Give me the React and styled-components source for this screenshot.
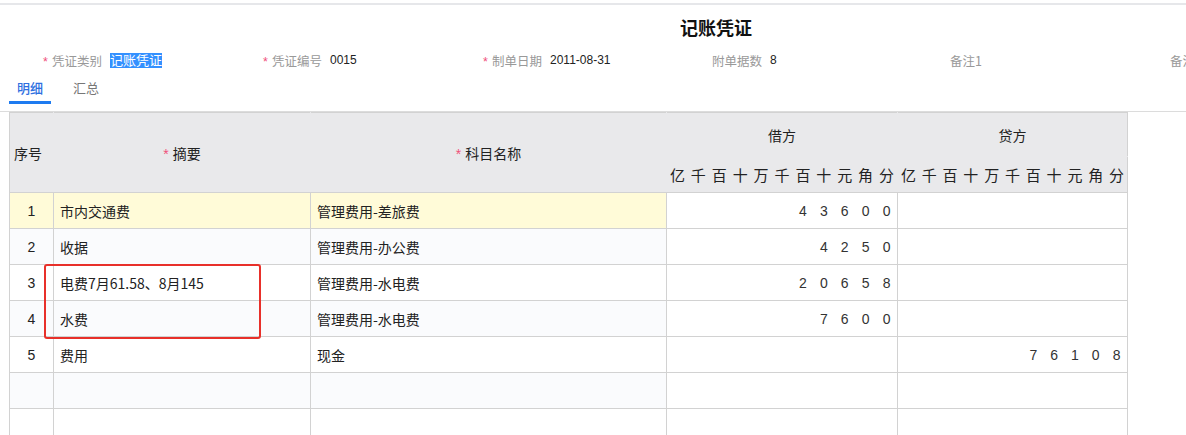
import styled, { createGlobalStyle } from "styled-components";

const GlobalStyle = createGlobalStyle`
  html, body {
    margin: 0;
    padding: 0;
    background: #ffffff;
    font-family: "Liberation Sans", "Noto Sans CJK SC", sans-serif;
    color: #333;
    overflow: hidden;
  }
`;

const UNITS = ["亿", "千", "百", "十", "万", "千", "百", "十", "元", "角", "分"];

const campos = [
  { label: "凭证类别", required: true, value: "记账凭证", selected: true },
  { label: "凭证编号", required: true, value: "0015" },
  { label: "制单日期", required: true, value: "2011-08-31" },
  { label: "附单据数", value: "8" },
  { label: "备注1", value: "" },
  { label: "备注2", value: "" },
];

const linhas = [
  { n: 1, resumo: "市内交通费", conta: "管理费用-差旅费", debito: "43600", ativo: true },
  { n: 2, resumo: "收据", conta: "管理费用-办公费", debito: "4250" },
  { n: 3, resumo: "电费7月61.58、8月145", conta: "管理费用-水电费", debito: "20658" },
  { n: 4, resumo: "水费", conta: "管理费用-水电费", debito: "7600" },
  { n: 5, resumo: "费用", conta: "现金", credito: "76108" },
  { n: "" },
  { n: "" },
];

function Digitos({ valor }) {
  const casas = Array(11).fill("");
  if (valor) {
    const s = valor.split("");
    s.forEach((d, i) => {
      casas[11 - s.length + i] = d;
    });
  }
  return (
    <DigitGrid>
      {casas.map((d, i) => (
        <Digit key={i}>{d}</Digit>
      ))}
    </DigitGrid>
  );
}

function Unidades() {
  return (
    <DigitGrid>
      {UNITS.map((u, i) => (
        <Unit key={i}>{u}</Unit>
      ))}
    </DigitGrid>
  );
}

function App() {
  return (
    <Page>
      <GlobalStyle />
      <TopLine />
      <Titulo>记账凭证</Titulo>

      <FormRow>
        {campos.map((c) => (
          <Field key={c.label}>
            <Label>
              {c.required && <Star>*</Star>}
              {c.label}
            </Label>
            <Value $selected={c.selected}>{c.value}</Value>
          </Field>
        ))}
      </FormRow>

      <Tabs>
        <Tab $active>明细</Tab>
        <Tab>汇总</Tab>
      </Tabs>

      <TableWrap>
        <Tabela>
          <colgroup>
            <col style={{ width: 44 }} />
            <col style={{ width: 257 }} />
            <col style={{ width: 356 }} />
            <col style={{ width: 231 }} />
            <col style={{ width: 230 }} />
          </colgroup>
          <thead>
            <tr>
              <HeadCell rowSpan={2} $first $bottom>
                序号
              </HeadCell>
              <HeadCell rowSpan={2} $bottom>
                <Star>*</Star>摘要
              </HeadCell>
              <HeadCell rowSpan={2} $bottom>
                <Star>*</Star>科目名称
              </HeadCell>
              <HeadCell $h={44}>借方</HeadCell>
              <HeadCell $h={44} $last>
                贷方
              </HeadCell>
            </tr>
            <tr>
              <UnitCell>
                <Unidades />
              </UnitCell>
              <UnitCell $last>
                <Unidades />
              </UnitCell>
            </tr>
          </thead>
          <tbody>
            {linhas.map((l, i) => (
              <Row key={i} $ativo={l.ativo} $par={i % 2 === 1}>
                <NumCell>{l.n}</NumCell>
                <TextCell>{l.resumo}</TextCell>
                <TextCell>{l.conta}</TextCell>
                <AmountCell>
                  <Digitos valor={l.debito} />
                </AmountCell>
                <AmountCell>
                  <Digitos valor={l.credito} />
                </AmountCell>
              </Row>
            ))}
          </tbody>
        </Tabela>
        <Destaque />
      </TableWrap>
    </Page>
  );
}

const Page = styled.div`
  width: 1186px;
  height: 435px;
  overflow: hidden;
`;

const TopLine = styled.div`
  height: 3px;
  border-bottom: 2px solid #e6e7ea;
`;

const Titulo = styled.div`
  padding: 9px 0 0 246px;
  height: 26px;
  line-height: 26px;
  text-align: center;
  font-family: "Noto Sans CJK SC", sans-serif;
  font-size: 18px;
  font-weight: 700;
  color: #111;
`;

const FormRow = styled.div`
  display: flex;
  align-items: center;
  height: 40px;
  padding-left: 40px;
  white-space: nowrap;
`;

const Field = styled.div`
  flex: 0 0 220px;
  display: flex;
  align-items: center;
  gap: 8px;
`;

const Label = styled.span`
  width: 62px;
  text-align: right;
  font-family: "Noto Sans CJK SC", sans-serif;
  font-size: 12.5px;
  color: #999;
`;

const Star = styled.span`
  color: #f0507a;
  margin-right: 4px;
  font-family: "Liberation Sans", sans-serif;
`;

const Value = styled.span`
  font-family: "Liberation Sans", "Noto Sans CJK SC", sans-serif;
  line-height: 15px;
  color: ${(p) => (p.$selected ? "#ffffff" : "#222")};
  background: ${(p) => (p.$selected ? "#3390ff" : "transparent")};
  font-size: ${(p) => (p.$selected ? "13px" : "12px")};
`;

const Tabs = styled.div`
  display: flex;
  gap: 14px;
  height: 31px;
  padding-left: 9px;
  border-bottom: 1px solid #dcdcdc;
`;

const Tab = styled.div`
  height: 21px;
  padding: 0 8px;
  line-height: 16px;
  font-family: "Noto Sans CJK SC", sans-serif;
  font-size: 13px;
  font-weight: ${(p) => (p.$active ? 500 : 400)};
  color: ${(p) => (p.$active ? "#2f6fdf" : "#777")};
  border-bottom: 3px solid ${(p) => (p.$active ? "#1e7bf0" : "transparent")};
  box-sizing: content-box;
`;

const TableWrap = styled.div`
  position: relative;
  margin-left: 9px;
  width: 1119px;
`;

const Tabela = styled.table`
  width: 1119px;
  table-layout: fixed;
  border-collapse: collapse;
  font-family: "Noto Sans CJK SC", sans-serif;
  font-size: 14px;
  color: #222;

  td,
  th {
    padding: 0;
    box-sizing: border-box;
  }

  td {
    border: 1px solid #d2d2d2;
  }
`;

const headBg = "#e9e9eb";
const line = "#d2d2d2";

const HeadCell = styled.th`
  background: ${headBg};
  font-weight: 400;
  height: ${(p) => (p.$h ? `${p.$h}px` : "auto")};
  text-align: ${(p) => (p.$first ? "left" : "center")};
  padding-left: ${(p) => (p.$first ? "4px" : "0")} !important;
  vertical-align: middle;
  border-top: 1px solid ${line};
  border-left: 1px solid ${(p) => (p.$first ? line : headBg)};
  border-right: 1px solid ${(p) => (p.$last ? line : headBg)};
  border-bottom: 1px solid ${(p) => (p.$bottom ? line : headBg)};
`;

const UnitCell = styled.th`
  background: ${headBg};
  height: 36px;
  font-weight: 400;
  border-top: 1px solid ${headBg};
  border-left: 1px solid ${headBg};
  border-right: 1px solid ${(p) => (p.$last ? line : headBg)};
  border-bottom: 1px solid ${line};
`;

const DigitGrid = styled.div`
  display: grid;
  grid-template-columns: repeat(11, 1fr);
`;

const Unit = styled.span`
  font-size: 15px;
  line-height: 20px;
  text-align: center;
  color: #222;
`;

const Digit = styled.span`
  font-family: "Liberation Sans", sans-serif;
  font-size: 14px;
  text-align: center;
  color: #333;
`;

const Row = styled.tr`
  height: 36px;

  td:nth-child(-n + 3) {
    background: ${(p) => (p.$ativo ? "#fffbd8" : p.$par ? "#fafbfd" : "#ffffff")};
  }
`;

const NumCell = styled.td`
  text-align: center;
  font-family: "Liberation Sans", sans-serif;
  font-size: 14px;
`;

const TextCell = styled.td`
  padding-left: 6px !important;
  white-space: nowrap;
  overflow: hidden;
`;

const AmountCell = styled.td`
  background: #ffffff;
`;

const Destaque = styled.div`
  position: absolute;
  left: 35px;
  top: 152px;
  width: 217px;
  height: 75px;
  border: 2px solid #e8302a;
  border-radius: 3px;
  box-sizing: border-box;
  pointer-events: none;
`;

export default App;
